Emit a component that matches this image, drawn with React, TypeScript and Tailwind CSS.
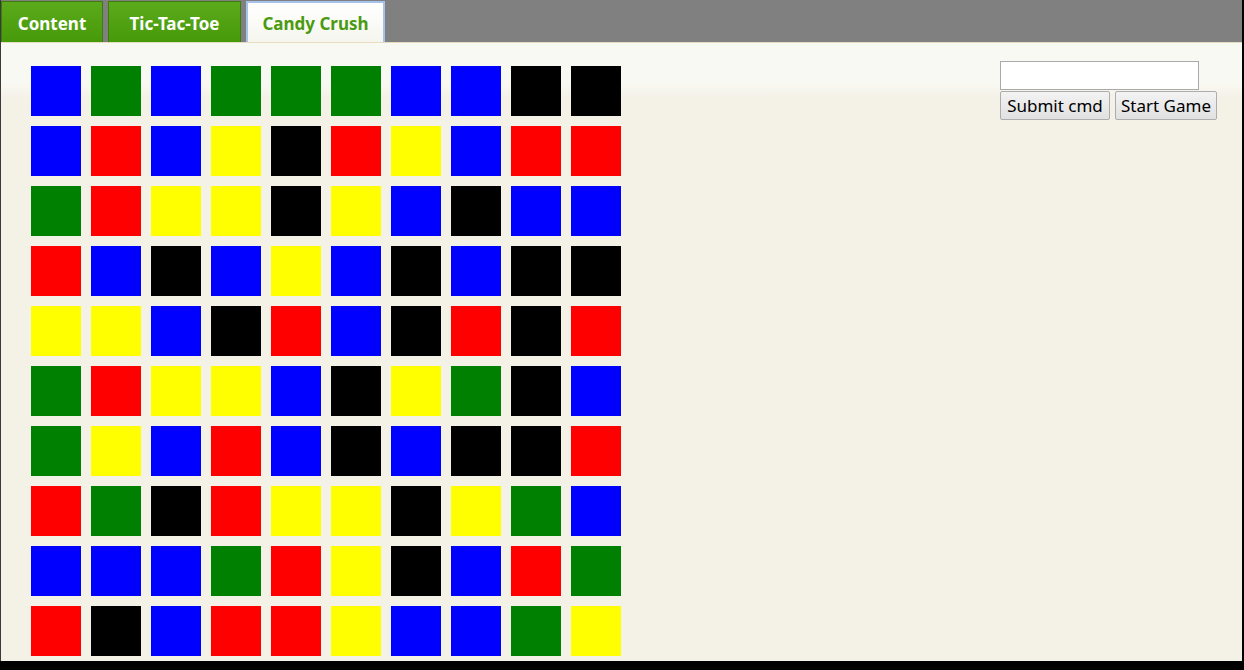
const board = [
  "BGBGGGBBKK",
  "BRBYKRYBRR",
  "GRYYKYBKBB",
  "RBKBYBKBKK",
  "YYBKRBKRKR",
  "GRYYBKYGKB",
  "GYBRBKBKKR",
  "RGKRYYKYGB",
  "BBBGRYKBRG",
  "RKBRRYBBGY",
];

const cellClass: Record<string, string> = {
  B: "bg-[#0000ff]",
  G: "bg-[#008000]",
  R: "bg-[#ff0000]",
  Y: "bg-[#ffff00]",
  K: "bg-[#000000]",
};

const Tab = ({ label, width, active }: { label: string; width: string; active?: boolean }) => {
  if (active) {
    return (
      <div className={`${width} h-[41px] pt-[3px] flex items-center justify-center border-2 border-[#a6c2ea] border-b-0 bg-[linear-gradient(to_bottom,#ffffff,#f6f6ef)] text-[#4a9a10] font-bold text-[17px]`}>
        {label}
      </div>
    );
  }
  return (
    <div className={`${width} h-[41px] pt-[3px] flex items-center justify-center border border-[#3d7d0c] border-b-0 bg-[linear-gradient(to_bottom,#5caa1c,#469a0a)] text-white font-bold text-[17px]`}>
      {label}
    </div>
  );
};

export default function App() {
  return (
    <div className="w-[1244px] h-[670px] bg-black overflow-hidden font-['Noto_Sans','Open_Sans',sans-serif]">
      <div className="h-[661px] mr-[2px] border-l border-[#3a3a3a] flex flex-col">
        {/* tab strip */}
        <div className="h-[42px] bg-[#808080] flex items-end gap-[5px] shrink-0">
          <Tab label="Content" width="w-[102px]" />
          <Tab label="Tic-Tac-Toe" width="w-[133px]" />
          <Tab label="Candy Crush" width="w-[139px]" active />
        </div>
        <div className="h-px bg-[#e6dcc0] shrink-0" />

        {/* game area */}
        <div className="flex-1 flex justify-between items-start pl-[30px] pr-[25px] bg-[linear-gradient(to_bottom,#f9f9f3_0px,#f9f9f3_40px,#f4f1e6_56px,#f4f1e6_100%)]">
          <div className="grid grid-cols-[repeat(10,50px)] auto-rows-[50px] gap-[10px] pt-[23px]">
            {board.flatMap((row, r) =>
              row.split("").map((c, i) => <div key={r + "-" + i} className={cellClass[c]} />)
            )}
          </div>

          <div className="pt-[18px] flex flex-col items-start">
            <input
              type="text"
              className="w-[199px] h-[29px] bg-white border border-[#a9a9a9] outline-none"
            />
            <div className="flex gap-[5px] mt-px">
              <button className="w-[110px] h-[29px] border border-[#adadad] rounded-[2px] bg-[linear-gradient(to_bottom,#f3f3f3,#e1e1e1)] text-[17px] leading-none text-black">
                Submit cmd
              </button>
              <button className="w-[102px] h-[29px] border border-[#adadad] rounded-[2px] bg-[linear-gradient(to_bottom,#f3f3f3,#e1e1e1)] text-[17px] leading-none text-black">
                Start Game
              </button>
            </div>
          </div>
        </div>
      </div>
    </div>
  );
}
